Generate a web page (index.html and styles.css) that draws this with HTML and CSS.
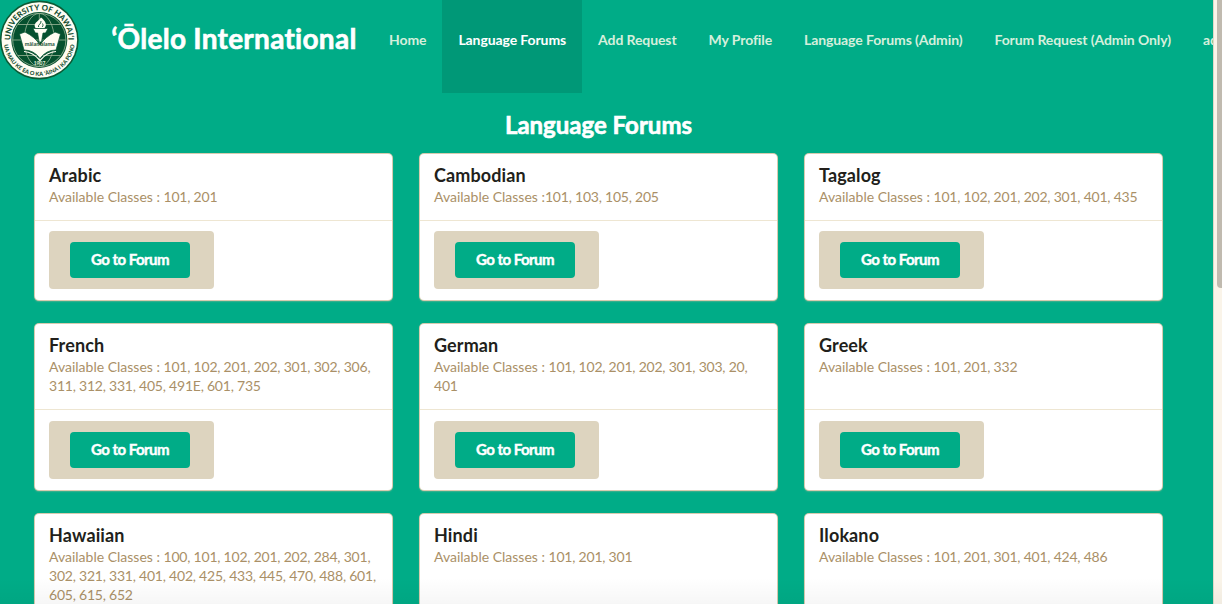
FILE: index.html
```html
<!DOCTYPE html>
<html lang="en">
<head>
<meta charset="utf-8">
<title>ʻŌlelo International</title>
<link rel="stylesheet" href="styles.css">
</head>
<body>
<div class="viewport">
  <div class="page">
    <header class="menu">
      <svg class="seal" viewBox="0 0 80 80" role="img" aria-label="University of Hawaiʻi">
        <defs>
          <path id="arc-top" d="M11 45.5A29 29 0 1 1 67.600 45.5"/>
          <path id="arc-bottom" d="M3.900 43A35.500 35.500 0 0 0 74.700 43"/>
        </defs>
        <circle cx="39.3" cy="40" r="39.4" fill="#0b5a35"/>
        <circle cx="39.3" cy="40" r="37.8" fill="#fffdf3"/>
        <circle cx="39.3" cy="40" r="28" fill="#05502e"/>
        <g fill="none" stroke="#9bb698" stroke-width=".8">
          <circle cx="39.3" cy="40" r="26.6"/>
          <ellipse cx="39.3" cy="40" rx="15" ry="26.6"/>
          <path d="M39.3 13.400v53.200M12.700 40h53.200M18 24.500h42.600M18 55.500h42.600"/>
        </g>
        <path d="M19.500 34L25 32Q35 37 40 45Q45 37 55 32L60.500 34L56 50Q46 50 40 58.500Q34 50 24 50Z" fill="#fffdf3" stroke="#05502e" stroke-width=".7"/>
        <path d="M24 51.500Q33 52 40 60.500Q47 52 56 51.500" fill="none" stroke="#fffdf3" stroke-width="1.200"/>
        <path d="M33 28.500h15l-2.500 4.500h-2.500l-1.500 9h-2.400l-1.500-9h-2.200z" fill="#fffdf3" stroke="#05502e" stroke-width=".7"/>
        <path d="M35.500 28C32.500 23 38 22 41 17.500C45.500 21 47.500 25 44.500 28Z" fill="#fffdf3"/>
        <path d="M38.500 27c-.8-2.500 3-2.800 2.500-6M42 27c1.500-1 1-2.500.5-3.500" fill="none" stroke="#05502e" stroke-width=".9"/>
        <text class="seal-motto" x="39.800" y="46.300" text-anchor="middle">mālamalama</text>
        <text class="seal-year" x="39.500" y="65" text-anchor="middle">1907</text>
        <text class="seal-top"><textPath href="#arc-top" startOffset="50%" text-anchor="middle">UNIVERSITY OF HAWAIʻI</textPath></text>
        <text class="seal-bottom"><textPath href="#arc-bottom" startOffset="50%" text-anchor="middle">UA MAU KE EA O KA ʻĀINA I KA PONO</textPath></text>
      </svg>
      <div class="brand">ʻŌlelo International</div>
      <nav class="nav">
        <a class="item">Home</a>
        <a class="item active">Language Forums</a>
        <a class="item">Add Request</a>
        <a class="item">My Profile</a>
        <a class="item">Language Forums (Admin)</a>
        <a class="item">Forum Request (Admin Only)</a>
        <a class="item">admin</a>
      </nav>
    </header>
    <main>
      <h2 class="title">Language Forums</h2>
      <div class="cards">
        <article class="card"><div class="content"><div class="header">Arabic</div><div class="meta">Available Classes : <span class="codes">101, 201</span></div></div><div class="extra"><div class="pad"><a class="button">Go to Forum</a></div></div></article>
        <article class="card"><div class="content"><div class="header">Cambodian</div><div class="meta">Available Classes :<span class="codes">101, 103, 105, 205</span></div></div><div class="extra"><div class="pad"><a class="button">Go to Forum</a></div></div></article>
        <article class="card"><div class="content"><div class="header">Tagalog</div><div class="meta">Available Classes : <span class="codes">101, 102, 201, 202, 301, 401, 435</span></div></div><div class="extra"><div class="pad"><a class="button">Go to Forum</a></div></div></article>
        <article class="card"><div class="content tall"><div class="header">French</div><div class="meta">Available Classes : <span class="codes">101, 102, 201, 202, 301, 302, 306, 311, 312, 331, 405, 491E, 601, 735</span></div></div><div class="extra"><div class="pad"><a class="button">Go to Forum</a></div></div></article>
        <article class="card"><div class="content tall"><div class="header">German</div><div class="meta">Available Classes : <span class="codes">101, 102, 201, 202, 301, 303, 20, 401</span></div></div><div class="extra"><div class="pad"><a class="button">Go to Forum</a></div></div></article>
        <article class="card"><div class="content tall"><div class="header">Greek</div><div class="meta">Available Classes : <span class="codes">101, 201, 332</span></div></div><div class="extra"><div class="pad"><a class="button">Go to Forum</a></div></div></article>
        <article class="card"><div class="content taller"><div class="header">Hawaiian</div><div class="meta">Available Classes : <span class="codes">100, 101, 102, 201, 202, 284, 301, 302, 321, 331, 401, 402, 425, 433, 445, 470, 488, 601, 605, 615, 652</span></div></div><div class="extra"><div class="pad"><a class="button">Go to Forum</a></div></div></article>
        <article class="card"><div class="content taller"><div class="header">Hindi</div><div class="meta">Available Classes : <span class="codes">101, 201, 301</span></div></div><div class="extra"><div class="pad"><a class="button">Go to Forum</a></div></div></article>
        <article class="card"><div class="content taller"><div class="header">Ilokano</div><div class="meta">Available Classes : <span class="codes">101, 201, 301, 401, 424, 486</span></div></div><div class="extra"><div class="pad"><a class="button">Go to Forum</a></div></div></article>
      </div>
    </main>
  </div>
  <div class="scrollbar"><div class="thumb"></div></div>
  <div class="shade"></div>
</div>
</body>
</html>
```
FILE: styles.css
```css
* { box-sizing: border-box; }
body {
  margin: 0;
  overflow: hidden;
  font-family: Lato, "Liberation Sans", sans-serif;
  font-size: 14px;
  font-variant-ligatures: none;
  color: #221f1b;
}
.viewport {
  display: flex;
  position: relative;
  height: 604px;
  overflow: hidden;
  background: #00ac87;
}
.page { flex: 1; min-width: 0; overflow: hidden; }
.menu { display: flex; height: 93px; white-space: nowrap; }
.seal { flex: none; width: 80px; height: 80px; }
.seal text { font-family: Lato, sans-serif; font-weight: 900; fill: #174f32; }
.seal .seal-top { font-size: 7.8px; letter-spacing: .1px; }
.seal .seal-bottom { font-size: 5.6px; letter-spacing: .05px; }
.seal .seal-motto { font-size: 5.4px; font-weight: 700; }
.seal .seal-year { font-size: 5px; fill: #dce6cf; }
.brand {
  flex: none;
  width: 293px;
  padding: 18px 0 0 31px;
  font-size: 28px;
  font-weight: 700;
  line-height: 40px;
  letter-spacing: .27px;
  -webkit-text-stroke: .6px #fff;
  color: #fff;
}
.nav { display: flex; flex: none; }
.item {
  padding: 31px 16px 0;
  line-height: 18px;
  font-weight: 700;
  letter-spacing: -.1px;
  color: #d5efdc;
}
.item.active { background: #009877; color: #fff; }
.title {
  margin: 14px 0 11px;
  padding-right: 16px;
  text-align: center;
  font-size: 24px;
  font-weight: 700;
  line-height: 36px;
  -webkit-text-stroke: .6px #fff;
  color: #fff;
}
.cards {
  display: grid;
  grid-template-columns: repeat(3, 357px);
  grid-template-rows: 146px 166px 186px;
  column-gap: 28px;
  row-gap: 24px;
  padding-left: 35px;
}
.card {
  display: flex;
  flex-direction: column;
  border-radius: 4px;
  background: #fff;
  box-shadow: 0 0 0 1px #d6cbb0, 0 1px 2px #c9bc9c;
}
.content { height: 66px; padding: 10px 14px 0; }
.content.tall { height: 85px; }
.content.taller { height: 105px; }
.header { font-size: 18px; font-weight: 700; line-height: 23px; letter-spacing: .12px; }
.meta { font-size: 14px; line-height: 19px; color: #aa9067; }
.codes { letter-spacing: -.22px; }
.extra {
  display: flex;
  flex: 1;
  align-items: flex-end;
  padding: 0 14px 11px;
  border-top: 1px solid #eee6d2;
}
.pad {
  display: flex;
  width: 165px;
  padding: 11px 21px;
  border-radius: 4px;
  background: #ddd4bf;
}
.button {
  width: 120px;
  padding-bottom: 2px;
  border-radius: 4px;
  background: #00ac87;
  text-align: center;
  font-size: 15px;
  letter-spacing: -.52px;
  font-weight: 700;
  line-height: 34px;
  -webkit-text-stroke: .4px #fff;
  color: #fff;
}
.scrollbar {
  width: 9px;
  border-left: 1px solid #ded9c8;
  padding-left: 3px;
  background: #faf4e9;
}
.thumb { height: 288px; border-radius: 0 0 0 4px; background: #c0baaf; }
.shade {
  position: absolute;
  inset: auto 0 0;
  height: 26px;
  background: linear-gradient(transparent, rgba(0, 0, 0, .035));
}
```
